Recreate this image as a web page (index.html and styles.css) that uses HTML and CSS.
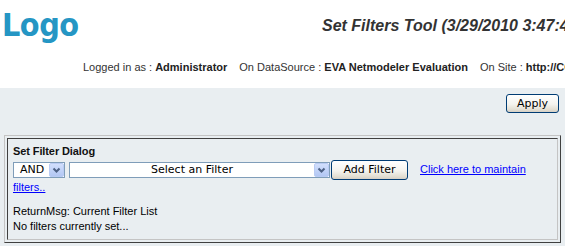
FILE: index.html
```html
<!DOCTYPE html>
<html lang="en">
<head>
    <meta charset="UTF-8" />
    <title>Set Filters Tool</title>
    <link rel="stylesheet" href="styles.css">
</head>
<body>
    <div class="header">
        <div class="top">
            <div class="logo">Logo</div>
            <div class="title">Set Filters Tool (3/29/2010 3:47:49 PM)</div>
        </div>
        <div class="userinfo"><span class="info-item">Logged in as : <b>Administrator</b></span><span class="info-item">On DataSource : <b>EVA Netmodeler Evaluation</b></span><span class="info-item">On Site : <b>http://CORPSERVER/EVA</b></span></div>
    </div>

    <div class="main">
        <div class="toolbar">
            <button class="btn btn-apply">Apply</button>
        </div>

        <div class="panel">
            <div class="panel-cell">
                <div class="panel-title">Set Filter Dialog</div>
                <div class="filter-row"><span class="combo combo-op"><span class="combo-text">AND</span><svg class="combo-arrow" viewBox="0 0 15 14"><defs><linearGradient id="ag1" x1="0" y1="0" x2="0" y2="1"><stop offset="0" stop-color="#d3e0fd"/><stop offset="1" stop-color="#b1c6f3"/></linearGradient></defs><rect x="0.5" y="0.5" width="14" height="13" rx="1.5" fill="url(#ag1)" stroke="#b9cbf3"/><path d="M4.5 5.5 L7.5 8.5 L10.5 5.5" fill="none" stroke="#4d6185" stroke-width="2"/></svg></span><span class="combo combo-filter"><span class="combo-text">Select an Filter</span><svg class="combo-arrow" viewBox="0 0 15 14"><defs><linearGradient id="ag2" x1="0" y1="0" x2="0" y2="1"><stop offset="0" stop-color="#d3e0fd"/><stop offset="1" stop-color="#b1c6f3"/></linearGradient></defs><rect x="0.5" y="0.5" width="14" height="13" rx="1.5" fill="url(#ag2)" stroke="#b9cbf3"/><path d="M4.5 5.5 L7.5 8.5 L10.5 5.5" fill="none" stroke="#4d6185" stroke-width="2"/></svg></span><button class="btn btn-add">Add Filter</button><a href="#" class="maintain-link">Click here to maintain filters..</a></div>
                <div class="return-msg">ReturnMsg: Current Filter List<br>No filters currently set...</div>
            </div>
        </div>
    </div>
</body>
</html>
```

FILE: styles.css
```css
html, body {
    margin: 0;
    overflow: hidden;
}
body {
    font-family: 'Liberation Sans', Arial, sans-serif;
    font-size: 11px;
    color: #000;
    background: #e9eef1;
}
.header {
    background: #fff;
    height: 88px;
    white-space: nowrap;
    overflow: hidden;
}
.top {
    display: flex;
    align-items: flex-start;
}
.logo {
    flex-shrink: 0;
    width: 320px;
    padding: 10px 0 0 2px;
    font-family: 'DejaVu Sans Condensed', 'DejaVu Sans', sans-serif;
    font-weight: bold;
    font-size: 32px;
    line-height: 31px;
    letter-spacing: -0.5px;
    color: #2596c4;
}
.title {
    flex-shrink: 0;
    padding-top: 17px;
    font-size: 16px;
    line-height: 18px;
    font-weight: bold;
    font-style: italic;
    color: #333;
}
.userinfo {
    margin-top: 20px;
    padding-left: 83px;
    line-height: 13px;
    color: #333;
}
.userinfo b {
    color: #222;
}
.info-item + .info-item {
    margin-left: 12px;
}

.toolbar {
    display: flex;
    justify-content: flex-end;
    height: 19px;
    padding: 6px 6px 0 0;
}
.btn {
    box-sizing: border-box;
    padding: 0;
    border: 1px solid #003c74;
    border-radius: 3px;
    background: linear-gradient(#ffffff, #f4f3ee 55%, #e3dfd3 85%, #d6d0c5);
    font-family: 'DejaVu Sans', sans-serif;
    font-size: 11px;
    color: #000;
    cursor: pointer;
}
.btn-apply {
    width: 53px;
    height: 19px;
    line-height: 17px;
}

.panel {
    margin: 22px 4px 0 4px;
    padding: 2px;
    border: 1px solid;
    border-color: #c4c4c4 #404040 #404040 #c4c4c4;
}
.panel-cell {
    padding: 5px 6px 5px 5px;
    border: 1px solid;
    border-color: #404040 #c4c4c4 #c4c4c4 #404040;
}
.panel-title {
    font-weight: bold;
    line-height: 14px;
    letter-spacing: -0.1px;
    color: #111;
}
.filter-row {
    padding-top: 2px;
    line-height: 15px;
}
.combo {
    display: inline-flex;
    align-items: flex-start;
    box-sizing: border-box;
    height: 16px;
    border: 1px solid #7f9db9;
    background: #fff;
    font-family: 'DejaVu Sans', sans-serif;
    font-size: 11px;
}
.combo-text {
    flex: 1;
    line-height: 14px;
}
.combo-arrow {
    width: 15px;
    height: 14px;
}
.combo-op {
    width: 52px;
}
.combo-op .combo-text {
    padding-left: 6px;
}
.combo-filter {
    width: 261px;
    margin-left: 4px;
}
.combo-filter .combo-text {
    text-align: center;
}
.btn-add {
    width: 77px;
    height: 20px;
    line-height: 18px;
    margin-left: 1px;
}
.maintain-link {
    margin-left: 12px;
    color: #0000ff;
    text-decoration: underline;
}
.return-msg {
    margin-top: 9px;
    line-height: 15px;
}
```
